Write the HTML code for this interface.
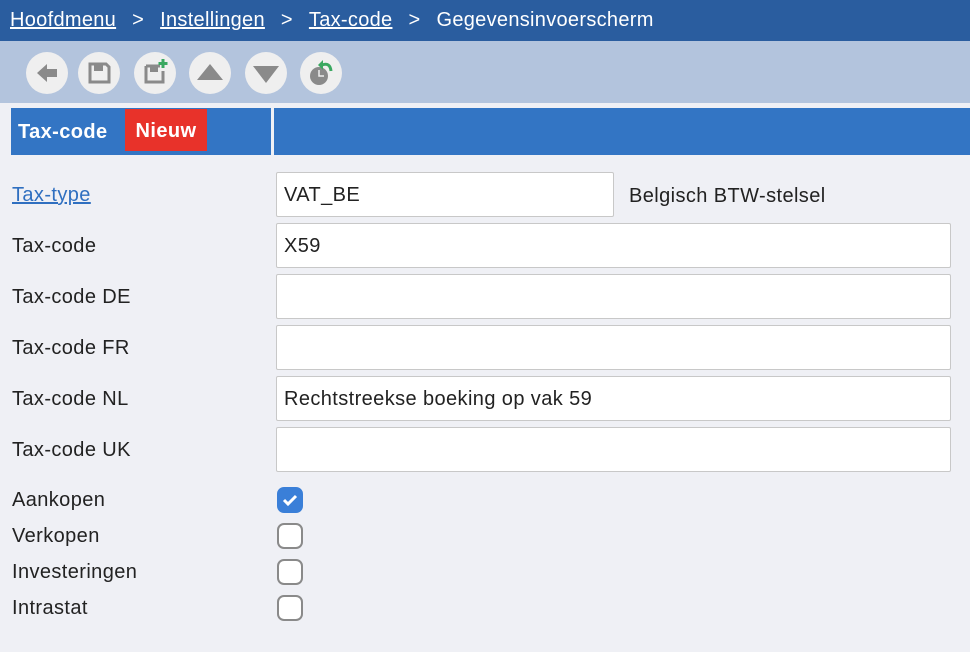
<!DOCTYPE html>
<html><head><style>
*{margin:0;padding:0;box-sizing:border-box}
body{width:970px;height:652px;background:#eff0f5;font-family:"Liberation Sans",sans-serif;position:relative;overflow:hidden;color:#222;letter-spacing:0.4px}
.hdr{position:absolute;left:0;top:0;width:970px;height:41px;background:#2a5d9f;color:#fff;font-size:20px;line-height:41px;padding-left:10px;white-space:nowrap;letter-spacing:0.3px}
.hdr u{text-decoration:underline}
.hdr s{text-decoration:none;display:inline-block;width:44px;text-align:center}
.tb{position:absolute;left:0;top:41px;width:970px;height:62px;background:#b3c4dd}
.ic{position:absolute;top:11px;width:42px;height:42px;border-radius:50%;background:#efefef}
.ic svg{width:42px;height:42px}
.tabL{position:absolute;left:11px;top:108px;width:260px;height:47px;background:#3375c4;color:#fff;font-weight:bold;font-size:20px}
.tabR{position:absolute;left:274px;top:108px;width:696px;height:47px;background:#3375c4}
.nw{position:absolute;left:114px;top:1px;width:82px;height:42px;background:#e8322a;line-height:44px;text-align:center}
.lbl{position:absolute;left:12px;font-size:20px;color:#222}
.inp{position:absolute;left:276px;height:45px;background:#fff;border:1px solid #c8c8c8;border-radius:2px;font-size:20px;line-height:45px;padding-left:7px}
.cb{position:absolute;left:277px;width:26px;height:26px;border:2px solid #8a8a8a;border-radius:7px;background:#fff}
.cb.on{background:#3a7fd8;border-color:#3a7fd8}
</style></head><body>
<div class="hdr"><u>Hoofdmenu</u><s>&gt;</s><u>Instellingen</u><s>&gt;</s><u>Tax-code</u><s>&gt;</s>Gegevensinvoerscherm</div>
<div class="tb">
<div class="ic" style="left:26px"><svg viewBox="0 0 42 42"><path d="M11 21 L21 12 L21 17 L31 17 L31 25 L21 25 L21 30 Z" fill="#8a8a8a"/></svg></div>
<div class="ic" style="left:78px"><svg viewBox="0 0 42 42"><path d="M12 12h16l3 3v15H12z" fill="none" stroke="#8a8a8a" stroke-width="3"/><rect x="16" y="12" width="9" height="7" fill="#8a8a8a"/></svg></div>
<div class="ic" style="left:134px"><svg viewBox="0 0 42 42"><path d="M12 14h14v0M12 14v16h17V19" fill="none" stroke="#8a8a8a" stroke-width="3"/><rect x="16" y="13" width="8" height="7" fill="#8a8a8a"/><path d="M29 7v9M24.5 11.5h9" stroke="#3aa860" stroke-width="3"/></svg></div>
<div class="ic" style="left:189px"><svg viewBox="0 0 42 42"><path d="M8 28 L21 12 L34 28Z" fill="#8a8a8a"/></svg></div>
<div class="ic" style="left:245px"><svg viewBox="0 0 42 42"><path d="M8 14 L34 14 L21 31Z" fill="#8a8a8a"/></svg></div>
<div class="ic" style="left:300px"><svg viewBox="0 0 42 42"><circle cx="19" cy="24" r="9" fill="#8a8a8a"/><path d="M19 18v6h5" stroke="#eee" stroke-width="1.5" fill="none"/><path d="M22 13 q8-3 9 6" stroke="#3aa860" stroke-width="3" fill="none"/><path d="M18 13 l5-5 v10z" fill="#3aa860"/></svg></div>
</div>
<div class="tabL"><span style="position:absolute;left:7px;top:1px;line-height:47px">Tax-code</span><div class="nw">Nieuw</div></div>
<div class="tabR"></div>
<div class="lbl" style="top:184px;color:#2f6fc0;text-decoration:underline">Tax-type</div>
<div class="inp" style="top:172px;width:338px">VAT_BE</div>
<div class="lbl" style="left:629px;top:185px">Belgisch BTW-stelsel</div>
<div class="lbl" style="top:235px">Tax-code</div><div class="inp" style="top:223px;width:675px">X59</div>
<div class="lbl" style="top:286px">Tax-code DE</div><div class="inp" style="top:274px;width:675px"></div>
<div class="lbl" style="top:337px">Tax-code FR</div><div class="inp" style="top:325px;width:675px"></div>
<div class="lbl" style="top:388px">Tax-code NL</div><div class="inp" style="top:376px;width:675px">Rechtstreekse boeking op vak 59</div>
<div class="lbl" style="top:439px">Tax-code UK</div><div class="inp" style="top:427px;width:675px"></div>
<div class="lbl" style="top:489px">Aankopen</div>
<div class="cb on" style="top:487px"><svg viewBox="0 0 26 26" style="position:absolute;left:-2px;top:-2px;width:26px;height:26px"><path d="M7 13l4 4 8-8" stroke="#fff" stroke-width="3" fill="none"/></svg></div>
<div class="lbl" style="top:525px">Verkopen</div><div class="cb" style="top:523px"></div>
<div class="lbl" style="top:561px">Investeringen</div><div class="cb" style="top:559px"></div>
<div class="lbl" style="top:597px">Intrastat</div><div class="cb" style="top:595px"></div>
</body></html>
